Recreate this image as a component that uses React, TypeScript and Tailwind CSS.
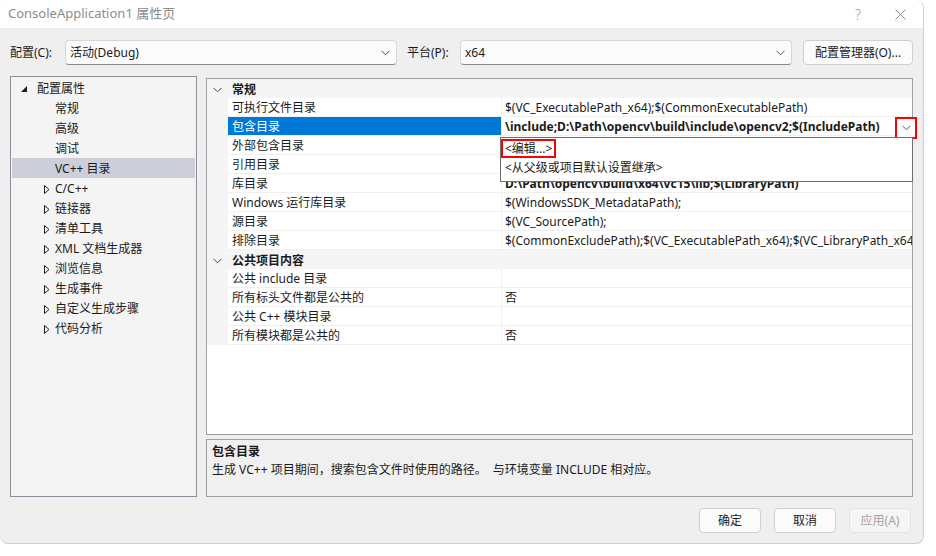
import React from "react";

const font = { fontFamily: '"Noto Sans", "Noto Sans CJK SC", sans-serif' };

function Chevron({ className = "" }: { className?: string }) {
  return (
    <svg width="9" height="6" viewBox="0 0 9 6" className={className}>
      <path d="M0.5 0.8 L4.5 4.8 L8.5 0.8" fill="none" stroke="currentColor" strokeWidth="1" />
    </svg>
  );
}

function Collapsed() {
  return (
    <svg width="6" height="9" viewBox="0 0 6 9" className="text-[#1e1e1e]">
      <path d="M0.5 0.5 L5 4.5 L0.5 8.5 Z" fill="none" stroke="currentColor" strokeWidth="1" />
    </svg>
  );
}

function Expanded() {
  return (
    <svg width="6" height="6" viewBox="0 0 6 6" className="text-[#1e1e1e]">
      <path d="M0 6 L6 6 L6 0 Z" fill="currentColor" />
    </svg>
  );
}

const treeItems = ["C/C++", "链接器", "清单工具", "XML 文档生成器", "浏览信息", "生成事件", "自定义生成步骤", "代码分析"];

type Row = { name: string; value?: string; bold?: boolean; selected?: boolean };

const general: Row[] = [
  { name: "可执行文件目录", value: "$(VC_ExecutablePath_x64);$(CommonExecutablePath)" },
  { name: "包含目录", value: "\\include;D:\\Path\\opencv\\build\\include\\opencv2;$(IncludePath)", bold: true, selected: true },
  { name: "外部包含目录", value: "" },
  { name: "引用目录", value: "" },
  { name: "库目录", value: "D:\\Path\\opencv\\build\\x64\\vc15\\lib;$(LibraryPath)", bold: true },
  { name: "Windows 运行库目录", value: "$(WindowsSDK_MetadataPath);" },
  { name: "源目录", value: "$(VC_SourcePath);" },
  { name: "排除目录", value: "$(CommonExcludePath);$(VC_ExecutablePath_x64);$(VC_LibraryPath_x64);$(VC_SourcePath)" },
];

const publicRows: Row[] = [
  { name: "公共 include 目录", value: "" },
  { name: "所有标头文件都是公共的", value: "否" },
  { name: "公共 C++ 模块目录", value: "" },
  { name: "所有模块都是公共的", value: "否" },
];

function Header({ title }: { title: string }) {
  return (
    <div className="flex h-[19px] items-center bg-[#f5f5f5] pt-[2px]">
      <div className="flex w-[21px] justify-center text-[#444]">
        <Chevron />
      </div>
      <span className="pl-[4px] font-bold">{title}</span>
    </div>
  );
}

function PropRow({ row }: { row: Row }) {
  return (
    <div className="flex h-[19px] items-stretch bg-[#f5f5f5]">
      <div className="w-[21px] shrink-0" />
      <div
        className={`flex w-[273px] shrink-0 items-center border-b border-[#f0f0f0] pl-[4px] pt-[2px] ${
          row.selected ? "bg-[#0078d7] text-white" : "bg-white"
        }`}
      >
        {row.name}
      </div>
      <div className="flex min-w-0 flex-1 items-center overflow-hidden whitespace-nowrap border-b border-l border-[#f0f0f0] bg-white pl-[3px] pt-[2px]">
        <span className={row.bold ? "font-bold" : ""}>{row.value}</span>
      </div>
    </div>
  );
}

export default function App() {
  return (
    <div className="h-[556px] w-[936px] overflow-hidden bg-white text-[12px] text-[#1a1a1a]" style={font}>
      <div className="flex h-[544px] w-[924px] flex-col overflow-hidden rounded-lg border-b border-r border-[#cfcfcf] bg-[#efefef]">
        {/* title bar */}
        <div className="flex h-[28px] shrink-0 items-center bg-white pl-[8px] text-[13px] text-[#8c8c8c]">
          <span className="flex-1">ConsoleApplication1 属性页</span>
          <span className="w-[46px] pr-[4px] text-center text-[14px] font-light text-[#9a9a9a]">?</span>
          <svg width="11" height="11" viewBox="0 0 11 11" className="mr-[17px] ml-[12px] text-[#8c8c8c]">
            <path d="M0.5 0.5 L10.5 10.5 M10.5 0.5 L0.5 10.5" stroke="currentColor" strokeWidth="1" />
          </svg>
        </div>

        {/* configuration row */}
        <div className="mt-[12px] flex h-[25px] items-center pl-[10px]">
          <span className="w-[55px]">配置(C):</span>
          <div className="flex h-[25px] w-[332px] items-center justify-between rounded-[4px] border border-[#d6d6d6] border-b-[#8a8a8a] bg-[#fbfbfb] px-[4px]">
            <span>活动(Debug)</span>
            <Chevron className="mr-[2px] text-[#555]" />
          </div>
          <span className="ml-[10px] w-[53px]">平台(P):</span>
          <div className="flex h-[25px] w-[332px] items-center justify-between rounded-[4px] border border-[#d6d6d6] border-b-[#8a8a8a] bg-[#fbfbfb] px-[4px]">
            <span>x64</span>
            <Chevron className="mr-[2px] text-[#555]" />
          </div>
          <div className="ml-[11px] flex h-[25px] w-[110px] items-center justify-center rounded-[4px] border border-[#d0d0d0] bg-[#fbfbfb]">
            配置管理器(O)...
          </div>
        </div>

        {/* main area */}
        <div className="mt-[11px] flex pl-[10px]">
          {/* tree */}
          <div className="h-[421px] w-[187px] shrink-0 border border-[#8d8d9b] bg-[#f4f4f4] p-px pt-[1px]">
            <div className="flex h-[20px] items-center pt-[2px]">
              <div className="flex w-[25px] justify-end pr-[10px]">
                <Expanded />
              </div>
              <span>配置属性</span>
            </div>
            {["常规", "高级", "调试", "VC++ 目录"].map((t) => (
              <div
                key={t}
                className={`flex h-[20px] items-center pl-[43px] pt-[2px] ${t === "VC++ 目录" ? "bg-[#ccceda]" : ""}`}
              >
                {t}
              </div>
            ))}
            {treeItems.map((t) => (
              <div key={t} className="flex h-[20px] items-center pt-[2px]">
                <div className="flex w-[43px] justify-end pr-[5px]">
                  <Collapsed />
                </div>
                <span>{t}</span>
              </div>
            ))}
          </div>

          {/* right column */}
          <div className="ml-[9px] flex w-[707px] flex-col pt-[2px]">
            <div className="relative h-[357px] border border-[#a0a0a0] bg-white">
              <div className="h-full overflow-hidden">
                <Header title="常规" />
                {general.map((r) => (
                  <PropRow key={r.name} row={r} />
                ))}
                <Header title="公共项目内容" />
                {publicRows.map((r) => (
                  <PropRow key={r.name} row={r} />
                ))}
              </div>

              {/* drop-down button of the selected value */}
              <div className="absolute left-[688px] top-[38px] flex h-[22px] w-[22px] items-center justify-center border-2 border-[#ff0000] bg-white text-[#555]">
                <Chevron />
              </div>

              {/* dropdown list */}
              <div className="absolute left-[293px] top-[58px] h-[45px] w-[413px] border border-[#6e6e6e] bg-white">
                <div className="relative flex h-[19px] items-center pl-[4px] pt-[2px]">
                  <span className="relative">
                    &lt;编辑...&gt;
                    <span className="absolute -left-[4px] -right-[4px] -top-[1px] bottom-[0px] border-2 border-[#ff0000]" />
                  </span>
                </div>
                <div className="flex h-[19px] items-center pl-[4px] pt-[2px]">&lt;从父级或项目默认设置继承&gt;</div>
              </div>
            </div>

            {/* description */}
            <div className="mt-[4px] h-[58px] border border-[#a0a0a0] bg-[#f0f0f0] px-[5px] pt-[3px]">
              <div className="font-bold leading-[18px]">包含目录</div>
              <div className="whitespace-pre leading-[18px]">生成 VC++ 项目期间，搜索包含文件时使用的路径。  与环境变量 INCLUDE 相对应。</div>
            </div>
          </div>
        </div>

        {/* buttons */}
        <div className="mt-[11px] flex justify-end gap-[13px] pr-[12px]">
          <div className="flex h-[25px] w-[62px] items-center justify-center rounded-[4px] border border-[#d0d0d0] bg-[#fbfbfb]">确定</div>
          <div className="flex h-[25px] w-[62px] items-center justify-center rounded-[4px] border border-[#d0d0d0] bg-[#fbfbfb]">取消</div>
          <div className="flex h-[25px] w-[62px] items-center justify-center rounded-[4px] border border-[#e3e3e3] bg-[#f5f5f5] text-[#a3a3a3]">应用(A)</div>
        </div>
      </div>
    </div>
  );
}
